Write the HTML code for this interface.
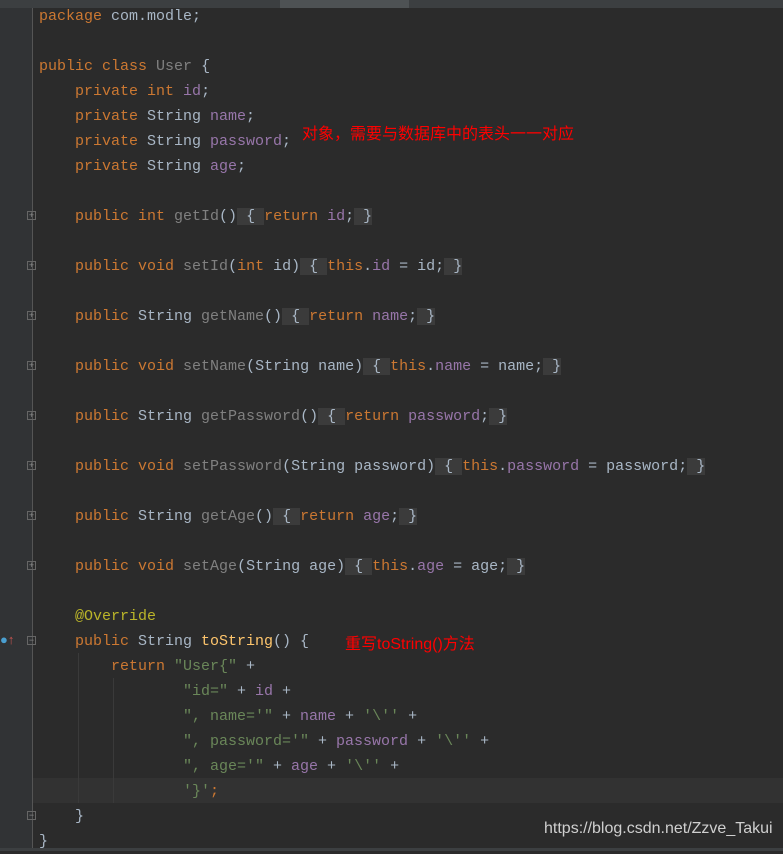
<!DOCTYPE html>
<html><head><meta charset="utf-8"><style>
html,body{margin:0;padding:0}
body{width:783px;height:851px;background:#2b2b2b;position:relative;overflow:hidden;font-family:"Liberation Mono",monospace;font-size:15px;color:#a9b7c6}
.tabs{position:absolute;left:0;top:0;width:783px;height:8px;background:#3c3f41}
.tabs .act{position:absolute;left:280px;top:0;width:129px;height:8px;background:#4e5254}
.gutter{position:absolute;left:0;top:8px;width:32px;height:843px;background:#313335}
.gl{position:absolute;left:32px;top:8px;width:1px;height:843px;background:#555}
.hl{position:absolute;left:33px;top:778px;width:750px;height:25px;background:#323232}
.l{position:absolute;height:25px;line-height:25px;white-space:pre}
.k{color:#cc7832}.f{color:#9876aa}.s{color:#6a8759}.m{color:#ffc66d}.g{color:#808080}.a{color:#bbb529}
.fd{background:#3b3b3b}
.fm{position:absolute;left:27px;width:9px;height:9px;border:1px solid #666;box-sizing:border-box;font-size:9px;line-height:7px;text-align:center;color:#888;font-family:"Liberation Sans",sans-serif}
.red{position:absolute;color:#f00;font-family:"Liberation Sans","Noto Sans CJK SC",sans-serif;font-size:16px;white-space:nowrap}
.wm{position:absolute;left:544px;top:820px;color:#cfcfcf;font-family:"Liberation Sans",sans-serif;font-size:16px}
.ig{position:absolute;width:1px;background:#3a3a3a}
.bot{position:absolute;left:0;top:848px;width:783px;height:3px;background:#3c3f41}
</style></head><body>
<div class="tabs"><div class="act"></div></div>
<div class="gutter"></div><div class="gl"></div>
<div class="hl"></div>
<div class="ig" style="left:78px;top:653px;height:150px"></div>
<div class="ig" style="left:113px;top:678px;height:125px"></div>

<div class="l" style="left:39px;top:4px"><span class="k">package</span> com.modle;</div>
<div class="l" style="left:39px;top:54px"><span class="k">public class</span> <span class="g">User</span> {</div>
<div class="l" style="left:75px;top:79px"><span class="k">private int</span> <span class="f">id</span>;</div>
<div class="l" style="left:75px;top:104px"><span class="k">private</span> String <span class="f">name</span>;</div>
<div class="l" style="left:75px;top:129px"><span class="k">private</span> String <span class="f">password</span>;</div>
<div class="l" style="left:75px;top:154px"><span class="k">private</span> String <span class="f">age</span>;</div>

<div class="l" style="left:75px;top:204px"><span class="k">public int</span> <span class="g">getId</span>()<span class="fd"> { </span><span class="k">return</span> <span class="f">id</span>;<span class="fd"> }</span></div>
<div class="l" style="left:75px;top:254px"><span class="k">public void</span> <span class="g">setId</span>(<span class="k">int</span> id)<span class="fd"> { </span><span class="k">this</span>.<span class="f">id</span> = id;<span class="fd"> }</span></div>
<div class="l" style="left:75px;top:304px"><span class="k">public</span> String <span class="g">getName</span>()<span class="fd"> { </span><span class="k">return</span> <span class="f">name</span>;<span class="fd"> }</span></div>
<div class="l" style="left:75px;top:354px"><span class="k">public void</span> <span class="g">setName</span>(String name)<span class="fd"> { </span><span class="k">this</span>.<span class="f">name</span> = name;<span class="fd"> }</span></div>
<div class="l" style="left:75px;top:404px"><span class="k">public</span> String <span class="g">getPassword</span>()<span class="fd"> { </span><span class="k">return</span> <span class="f">password</span>;<span class="fd"> }</span></div>
<div class="l" style="left:75px;top:454px"><span class="k">public void</span> <span class="g">setPassword</span>(String password)<span class="fd"> { </span><span class="k">this</span>.<span class="f">password</span> = password;<span class="fd"> }</span></div>
<div class="l" style="left:75px;top:504px"><span class="k">public</span> String <span class="g">getAge</span>()<span class="fd"> { </span><span class="k">return</span> <span class="f">age</span>;<span class="fd"> }</span></div>
<div class="l" style="left:75px;top:554px"><span class="k">public void</span> <span class="g">setAge</span>(String age)<span class="fd"> { </span><span class="k">this</span>.<span class="f">age</span> = age;<span class="fd"> }</span></div>

<div class="l" style="left:75px;top:604px"><span class="a">@Override</span></div>
<div class="l" style="left:75px;top:629px"><span class="k">public</span> String <span class="m">toString</span>() {</div>
<div class="l" style="left:111px;top:654px"><span class="k">return</span> <span class="s">"User{"</span> +</div>
<div class="l" style="left:183px;top:679px"><span class="s">"id="</span> + <span class="f">id</span> +</div>
<div class="l" style="left:183px;top:704px"><span class="s">", name='"</span> + <span class="f">name</span> + <span class="s">'\''</span> +</div>
<div class="l" style="left:183px;top:729px"><span class="s">", password='"</span> + <span class="f">password</span> + <span class="s">'\''</span> +</div>
<div class="l" style="left:183px;top:754px"><span class="s">", age='"</span> + <span class="f">age</span> + <span class="s">'\''</span> +</div>
<div class="l" style="left:183px;top:779px"><span class="s">'}'</span><span class="k">;</span></div>
<div class="l" style="left:75px;top:804px">}</div>
<div class="l" style="left:39px;top:829px">}</div>

<div class="fm" style="top:211px">+</div>
<div class="fm" style="top:261px">+</div>
<div class="fm" style="top:311px">+</div>
<div class="fm" style="top:361px">+</div>
<div class="fm" style="top:411px">+</div>
<div class="fm" style="top:461px">+</div>
<div class="fm" style="top:511px">+</div>
<div class="fm" style="top:561px">+</div>
<div class="fm" style="top:636px">−</div>
<div class="fm" style="top:811px">−</div>
<div style="position:absolute;left:0;top:632px;color:#4a9fd0;font-size:13px;font-family:'Liberation Sans',sans-serif">●<span style="color:#c75450">↑</span></div>

<div class="red" style="left:302px;top:120px">对象，需要与数据库中的表头一一对应</div>
<div class="red" style="left:345px;top:630px">重写toString()方法</div>
<div class="wm">https://blog.csdn.net/Zzve_Takui</div>
<div class="bot"></div>
</body></html>
